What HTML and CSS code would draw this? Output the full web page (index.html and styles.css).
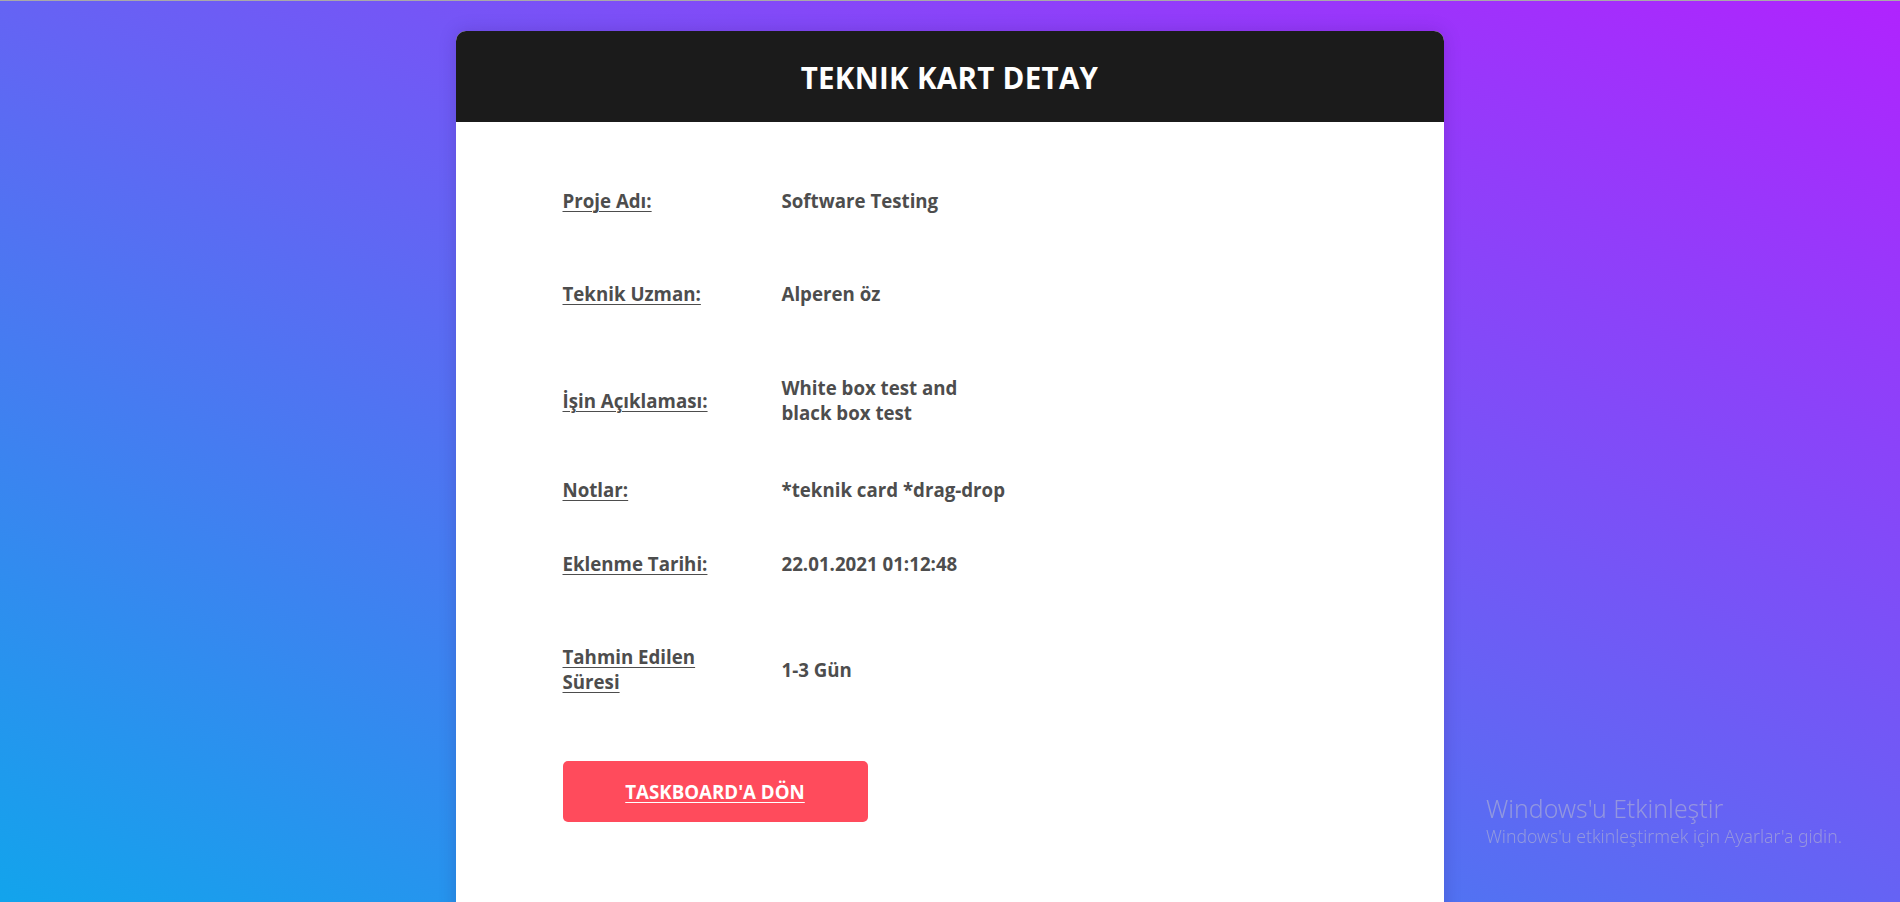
FILE: index.html
```html
<!DOCTYPE html>
<html lang="tr">
<head>
<meta charset="utf-8">
<title>Teknik Kart Detay</title>
<link rel="stylesheet" href="styles.css">
</head>
<body>
<main class="card">
  <header class="card-header">
    <h1 class="card-title">TEKNIK KART DETAY</h1>
  </header>
  <section class="card-body">
    <div class="details">
      <div class="label"><span>Proje Adı:</span></div>
      <div class="value">Software Testing</div>

      <div class="label"><span>Teknik Uzman:</span></div>
      <div class="value">Alperen öz</div>

      <div class="label"><span>İşin Açıklaması:</span></div>
      <div class="value">White box test and black box test</div>

      <div class="label"><span>Notlar:</span></div>
      <div class="value">*teknik card *drag-drop</div>

      <div class="label"><span>Eklenme Tarihi:</span></div>
      <div class="value">22.01.2021 01:12:48</div>

      <div class="label"><span>Tahmin Edilen Süresi</span></div>
      <div class="value">1-3 Gün</div>
    </div>
    <a class="back-btn" href="#">TASKBOARD'A DÖN</a>
  </section>
</main>
<div class="watermark">
  <div class="wm-title">Windows'u Etkinleştir</div>
  <div class="wm-sub">Windows'u etkinleştirmek için Ayarlar'a gidin.</div>
</div>
</body>
</html>
```

FILE: styles.css
```css
html {
  height: 100%;
  border-top: 1px solid #a9a9a9;
  box-sizing: border-box;
}
body {
  margin: 0;
  min-height: 100%;
  height: 901px;
  overflow: hidden;
  background: linear-gradient(to top right, #12a4ec 0%, #6563f4 50%, #b023fe 100%);
  font-family: "Open Sans", "Noto Sans", sans-serif;
  display: flex;
  justify-content: center;
  padding-top: 30px;
  box-sizing: border-box;
}
.card {
  width: 988px;
  margin-left: -1px;
  background: #fff;
  border-radius: 10px 10px 0 0;
  box-shadow: 0 0 18px rgba(40, 0, 90, 0.18);
  align-self: flex-start;
}
.card-header {
  background: #1b1b1b;
  height: 91px;
  border-radius: 10px 10px 0 0;
  display: flex;
  align-items: center;
  justify-content: center;
}
.card-title {
  margin: 0;
  color: #fff;
  font-size: 29.5px;
  font-weight: 700;
  letter-spacing: 0.3px;
  padding-top: 2px;
}
.card-body {
  padding: 38px 0 120px 107px;
}
.details {
  display: grid;
  grid-template-columns: 160px 230px;
  grid-template-rows: 80px 106px 108px 70px 78px 134px;
  column-gap: 59px;
  align-items: center;
  color: #4d4d4d;
  font-size: 18.7px;
  font-weight: 700;
  line-height: 25px;
}
.label span {
  text-decoration: underline;
  text-underline-offset: 3px;
  text-decoration-thickness: 1px;
}
.value {
  color: #4d4d4d;
}
.back-btn {
  margin-top: 25px;
  display: flex;
  align-items: center;
  justify-content: center;
  width: 305px;
  height: 61px;
  background: #ff4b5c;
  border-radius: 5px;
  color: #fff;
  font-size: 18.7px;
  font-weight: 700;
  text-decoration: underline;
  text-underline-offset: 3px;
  text-decoration-thickness: 1px;
}
.watermark {
  position: fixed;
  left: 1486px;
  top: 794px;
  color: rgba(190, 190, 205, 0.55);
  font-family: "Noto Sans", "Open Sans", sans-serif;
  font-weight: 300;
  line-height: 1.2;
}
.wm-title {
  font-size: 24.8px;
}
.wm-sub {
  font-size: 17.6px;
  margin-top: 2px;
}
```
